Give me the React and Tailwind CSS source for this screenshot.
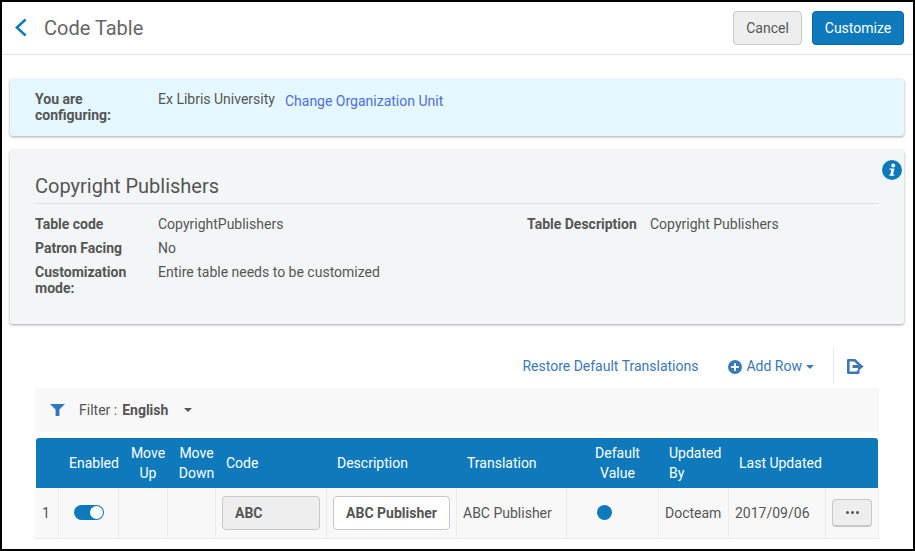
const font = { fontFamily: "Roboto, sans-serif" };

const headCols = "grid grid-cols-[22px_60px_49px_48px_111px_130px_110px_92px_70px_97px_54px]";
const rowCols = "grid grid-cols-[24px_60px_49px_48px_111px_130px_110px_92px_70px_97px_53px]";

function Field({ label, children, className = "" }) {
  return (
    <div className={`flex ${className}`}>
      <div className="w-[123px] shrink-0 font-bold text-[#555] leading-[16px]">{label}</div>
      <div className="leading-[16px]">{children}</div>
    </div>
  );
}

function Th({ children, className = "" }) {
  return <div className={`flex items-center px-[11px] leading-[20px] ${className}`}>{children}</div>;
}

function Td({ children, className = "" }) {
  return <div className={`flex items-center border-r border-[#ececec] ${className}`}>{children}</div>;
}

export default function App() {
  return (
    <div
      className="box-border w-[915px] h-[551px] overflow-hidden border-2 border-black bg-white text-[14px] text-[#555]"
      style={font}
    >
      <header className="flex h-[53px] items-center justify-between border-b border-[#e2e2e2] pl-[11px] pr-[9px]">
        <div className="flex items-center">
          <svg width="16" height="20" viewBox="0 0 16 20" fill="none" className="mr-[15px]">
            <path d="M12.6 1.5 L3.8 9.5 L12.6 17.5" stroke="#0e7abb" strokeWidth="2.4" />
          </svg>
          <h1 className="text-[20px] text-[#666]">Code Table</h1>
        </div>
        <div className="flex gap-[10px]">
          <button className="h-[34px] w-[69px] rounded-[4px] border border-[#c8c8c8] bg-[#eeeeee] text-[#555]">Cancel</button>
          <button className="h-[34px] w-[92px] rounded-[4px] border border-[#0b6aa3] bg-[#0e7abb] text-white">Customize</button>
        </div>
      </header>

      <div className="pl-[8px] pr-[9px] pt-[24px]">
        <section className="flex h-[57px] rounded-[3px] bg-[#e5f8ff] pl-[25px] pt-[12px] shadow-[0_1px_3px_rgba(0,0,0,0.35)]">
          <div className="w-[123px] shrink-0 font-bold leading-[16px]">You are configuring:</div>
          <div className="leading-[16px]">Ex Libris University</div>
          <a className="ml-[10px] leading-[20px] text-[#4a6fdc]">Change Organization Unit</a>
        </section>

        <section className="relative mt-[14px] h-[174px] rounded-[3px] bg-[#f3f6f7] px-[25px] pt-[24px] shadow-[0_1px_3px_rgba(0,0,0,0.35)]">
          <h2 className="border-b border-[#e0e0e0] pb-[5px] text-[20px] leading-[24px] text-[#555]">Copyright Publishers</h2>
          <div className="mt-[12px] flex">
            <div className="w-[492px]">
              <Field label="Table code">CopyrightPublishers</Field>
              <Field label="Patron Facing" className="mt-[8px]">No</Field>
              <Field label="Customization mode:" className="mt-[8px]">Entire table needs to be customized</Field>
            </div>
            <Field label="Table Description">Copyright Publishers</Field>
          </div>
          <svg width="20" height="20" viewBox="0 0 20 20" className="absolute right-[2px] top-[10px]">
            <circle cx="10" cy="10" r="10" fill="#0e7abb" />
            <circle cx="11.2" cy="5.4" r="2" fill="#fff" />
            <path d="M7.6 8.4h4.8l-1.3 6h1.3l-.3 1.4H7.2l.3-1.4h.9l.9-4.6H7.3z" fill="#fff" />
          </svg>
        </section>

        <div className="mx-[25px]">
          <div className="mt-[25px] flex h-[35px] items-center justify-end text-[#3b78b5]">
            <a>Restore Default Translations</a>
            <svg width="14" height="14" viewBox="0 0 14 14" className="ml-[30px] mr-[4px]">
              <circle cx="7" cy="7" r="7" fill="#3b78b5" />
              <path d="M7 3.2v7.6M3.2 7h7.6" stroke="#fff" strokeWidth="2" />
            </svg>
            <a>Add Row</a>
            <span className="ml-[4px] mt-[1px] h-0 w-0 border-x-[4px] border-t-[4px] border-x-transparent border-t-[#3b78b5]" />
            <div className="ml-[19px] h-[35px] w-px bg-[#e6e6e6]" />
            <svg width="17" height="15" viewBox="0 0 17 15" fill="none" className="ml-[13px] mr-[15px]">
              <path d="M11.2 4.8L8 1.3H1.3V13.7H11.2V11.2" stroke="#3b78b5" strokeWidth="2.6" strokeLinejoin="round" />
              <path d="M5.5 7.5H12" stroke="#3b78b5" strokeWidth="3" />
              <path d="M11 2.8L16.6 7.5L11 12.2z" fill="#3b78b5" />
            </svg>
          </div>

          <div className="mt-[4px] flex h-[44px] items-center bg-[#f8f8f8] pl-[15px]">
            <svg width="15" height="12" viewBox="0 0 15 12" className="mr-[14px]">
              <path d="M0 0H15L9.4 5.6V12H5.6V5.6z" fill="#2f76c0" />
            </svg>
            <span className="mr-[5px]">Filter :</span>
            <b className="font-bold">English</b>
            <span className="ml-[16px] h-0 w-0 border-x-[4px] border-t-[4px] border-x-transparent border-t-[#555]" />
          </div>

          <div className="mt-[6px]">
            <div className={`${headCols} mx-[1px] h-[50px] rounded-t-[3px] bg-[#0e7abb] text-white`}>
              <div />
              <Th>Enabled</Th>
              <Th className="justify-center pr-0 text-center">Move Up</Th>
              <Th className="justify-center pr-0 text-center">Move Down</Th>
              <Th>Code</Th>
              <Th>Description</Th>
              <Th>Translation</Th>
              <Th className="justify-center pr-0 text-center">Default Value</Th>
              <Th>Updated By</Th>
              <Th className="whitespace-nowrap">Last Updated</Th>
              <div />
            </div>
            <div className={`${rowCols} h-[51px] border-b border-[#ececec] bg-[#f8f8f8]`}>
              <Td className="pl-[7px]">1</Td>
              <Td className="justify-center">
                <span className="mb-[1px] flex h-[15px] w-[30px] items-center justify-end rounded-full bg-[#0e7abb] pr-[1px]">
                  <span className="h-[13px] w-[13px] rounded-full bg-white" />
                </span>
              </Td>
              <Td />
              <Td />
              <Td className="justify-center">
                <div className="flex h-[34px] w-[98px] items-center rounded-[4px] border border-[#c8c8c8] bg-[#eeeeee] pl-[12px] font-bold">ABC</div>
              </Td>
              <Td className="justify-center">
                <div className="flex h-[34px] w-[117px] items-center justify-center rounded-[4px] border border-[#c8c8c8] bg-white font-bold">ABC Publisher</div>
              </Td>
              <Td className="pl-[6px]">ABC Publisher</Td>
              <Td className="pl-[30px]">
                <span className="mb-[1px] h-[15px] w-[15px] rounded-full bg-[#0e7abb]" />
              </Td>
              <Td className="pl-[6px]">Docteam</Td>
              <Td className="pl-[6px]">2017/09/06</Td>
              <Td className="justify-center">
                <button className="flex h-[28px] w-[40px] items-center justify-center gap-[2px] rounded-[4px] border border-b-2 border-[#c8c8c8] bg-[#eeeeee]">
                  <span className="h-[3px] w-[3px] rounded-full bg-[#555]" />
                  <span className="h-[3px] w-[3px] rounded-full bg-[#555]" />
                  <span className="h-[3px] w-[3px] rounded-full bg-[#555]" />
                </button>
              </Td>
            </div>
          </div>
        </div>
      </div>
    </div>
  );
}
